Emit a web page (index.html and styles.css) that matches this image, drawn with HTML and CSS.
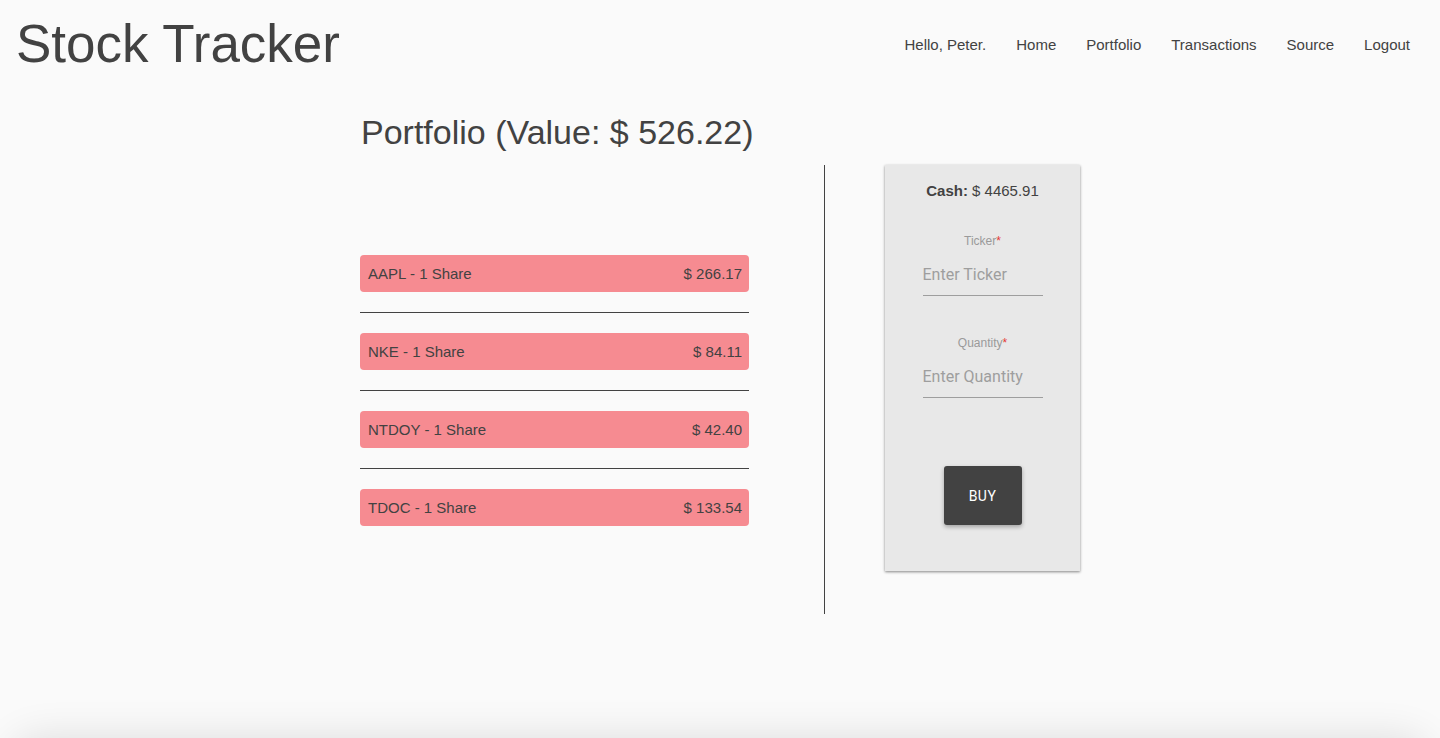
FILE: index.html
```html
<!DOCTYPE html>
<html lang="en">
<head>
<meta charset="utf-8">
<title>Stock Tracker</title>
<link rel="stylesheet" href="styles.css">
</head>
<body>
<div class="page">
  <header class="topbar">
    <h1 class="brand">Stock Tracker</h1>
    <nav class="nav">
      <span class="nav-item">Hello, Peter.</span>
      <a class="nav-item" href="#">Home</a>
      <a class="nav-item" href="#">Portfolio</a>
      <a class="nav-item" href="#">Transactions</a>
      <a class="nav-item" href="#">Source</a>
      <a class="nav-item" href="#">Logout</a>
    </nav>
  </header>
  <main class="container">
    <h2 class="heading">Portfolio (Value: $ 526.22)</h2>
    <div class="columns">
      <section class="holdings">
        <div class="holding"><span>AAPL - 1 Share</span><span>$ 266.17</span></div>
        <hr class="sep">
        <div class="holding"><span>NKE - 1 Share</span><span>$ 84.11</span></div>
        <hr class="sep">
        <div class="holding"><span>NTDOY - 1 Share</span><span>$ 42.40</span></div>
        <hr class="sep">
        <div class="holding"><span>TDOC - 1 Share</span><span>$ 133.54</span></div>
      </section>
      <div class="divider"></div>
      <aside class="card">
        <p class="cash"><b>Cash:</b> $ 4465.91</p>
        <label class="field">
          <span class="label">Ticker<span class="req">*</span></span>
          <input class="input" type="text" placeholder="Enter Ticker">
        </label>
        <label class="field field-2">
          <span class="label">Quantity<span class="req">*</span></span>
          <input class="input" type="text" placeholder="Enter Quantity">
        </label>
        <button class="buy" type="button">BUY</button>
      </aside>
    </div>
  </main>
</div>
<footer class="footer"></footer>
</body>
</html>
```

FILE: styles.css
```css
html, body {
  margin: 0;
  padding: 0;
  background: #fafafa;
}
body {
  font-family: "Liberation Sans", Arial, Helvetica, sans-serif;
  color: #424242;
  overflow-x: hidden;
}
.page {
  min-height: 738px;
}
.topbar {
  display: flex;
  justify-content: space-between;
  align-items: flex-start;
}
.brand {
  margin: 13px 0 0 16px;
  font-size: 53px;
  line-height: 61px;
  font-weight: 400;
  color: #424242;
}
.nav {
  display: flex;
  padding: 36px 15px 0 0;
}
.nav-item {
  padding: 0 15px;
  font-size: 15px;
  line-height: 17px;
  color: #424242;
  text-decoration: none;
}
.container {
  width: 720px;
  margin: 0 auto;
}
.heading {
  margin: 39px 0 0 1px;
  font-size: 34px;
  line-height: 39px;
  font-weight: 400;
}
.columns {
  display: flex;
  align-items: flex-start;
  margin-top: 13px;
}
.holdings {
  width: 389px;
  padding-top: 90px;
}
.holding {
  display: flex;
  justify-content: space-between;
  align-items: center;
  height: 37px;
  padding: 0 7px 0 8px;
  background: #f68b91;
  border-radius: 4px;
  font-size: 15px;
}
.sep {
  margin: 20px 0;
  border: 0;
  border-top: 1px solid #424242;
  height: 0;
}
.divider {
  width: 1px;
  height: 449px;
  margin-left: 75px;
  background: #424242;
}
.card {
  width: 195px;
  margin-left: 60px;
  background: #e8e8e8;
  box-shadow: 0 1px 3px rgba(0,0,0,0.3), 0 1px 2px rgba(0,0,0,0.2);
  display: flex;
  flex-direction: column;
  align-items: center;
  padding: 17px 0 46px;
}
.cash {
  margin: 0;
  font-size: 15px;
  line-height: 17px;
}
.field {
  display: flex;
  flex-direction: column;
  align-items: center;
  margin-top: 35px;
}
.field-2 {
  margin-top: 40px;
}
.label {
  font-family: "Liberation Sans", Arial, sans-serif;
  font-size: 12px;
  line-height: 14px;
  color: #9a9a9a;
}
.req {
  color: #e53935;
}
.input {
  box-sizing: content-box;
  width: 120px;
  height: 30px;
  margin-top: 11px;
  padding: 0 0 6px;
  border: 0;
  border-bottom: 1px solid #9e9e9e;
  background: transparent;
  font-family: Roboto, "Noto Sans", sans-serif;
  font-size: 16px;
  color: #424242;
  outline: none;
}
.input::placeholder {
  color: #9e9e9e;
}
.buy {
  margin-top: 68px;
  width: 78px;
  height: 59px;
  border: 0;
  border-radius: 3px;
  background: #424242;
  color: #ffffff;
  font-family: Roboto, "Noto Sans", sans-serif;
  font-size: 14px;
  letter-spacing: 0.5px;
  box-shadow: 0 2px 4px rgba(0,0,0,0.3);
}
.footer {
  height: 60px;
  margin: 0 10px;
  border-radius: 30px;
  background: #fafafa;
  box-shadow: 0 0 40px rgba(0,0,0,0.12);
}
```
